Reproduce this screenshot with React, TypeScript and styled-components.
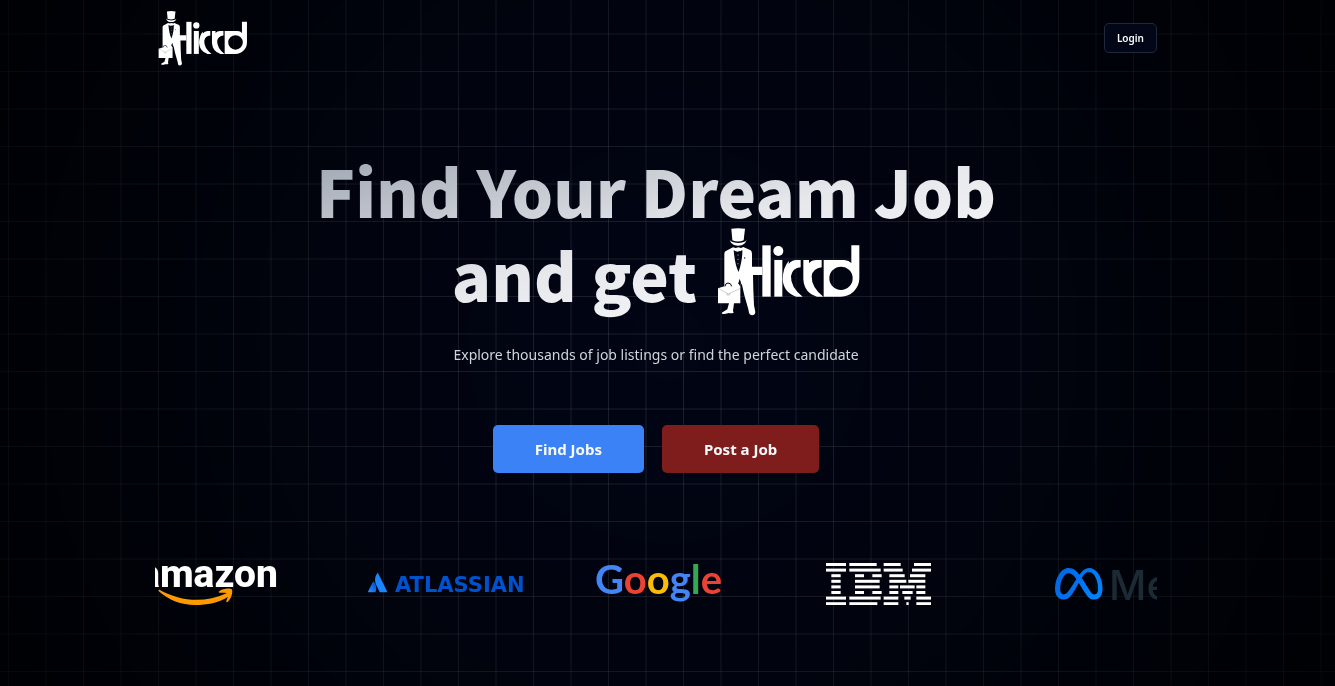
import React from "react";
import styled, { createGlobalStyle } from "styled-components";

const GlobalStyle = createGlobalStyle`
  *, *::before, *::after { box-sizing: border-box; }
  body {
    margin: 0;
    background: #020617;
    color: #f8fafc;
    font-family: "Noto Sans", "Open Sans", sans-serif;
  }
`;

const crispLine = "rgba(255, 255, 255, 0.12)";
const softLine = "rgba(255, 255, 255, 0.06)";

const GridBackdrop = styled.div`
  position: fixed;
  inset: 0;
  z-index: -1;
  background-image:
    radial-gradient(circle farthest-corner, rgba(0, 0, 0, 0.1) 0%, rgba(0, 0, 0, 0.4) 50%, rgba(0, 0, 0, 0.8) 100%),
    linear-gradient(to right, transparent 8px, ${crispLine} 8px, ${crispLine} 9px, transparent 9px, transparent 45px, ${softLine} 45px, ${softLine} 47px, transparent 47px),
    linear-gradient(to bottom, transparent 33px, ${softLine} 33px, ${softLine} 35px, transparent 35px, transparent 71px, ${crispLine} 71px, ${crispLine} 72px, transparent 72px);
  background-size: 100% 100%, 75px 75px, 75px 75px;
`;

const Page = styled.div`
  padding-right: 23px;
`;

const Container = styled.div`
  max-width: 1050px;
  margin: 0 auto;
  padding: 0 24px;
`;

const Header = styled.header`
  display: flex;
  align-items: center;
  justify-content: space-between;
  height: 76px;
`;

const HomeLink = styled.a`
  display: flex;
  padding-left: 3px;
`;

const LoginButton = styled.button`
  height: 30px;
  padding: 0 12px;
  border: 1px solid #1e293b;
  border-radius: 5px;
  background: #020617;
  color: #f8fafc;
  font: 600 10px/16px "Noto Sans", sans-serif;
  cursor: pointer;
`;

const Hero = styled.section`
  display: flex;
  flex-direction: column;
  align-items: center;
  padding-top: 72px;
`;

const Title = styled.h1`
  margin: 0;
  padding-bottom: 8px;
  background: linear-gradient(to bottom right, #9ca3af, #e5e7eb, #ffffff);
  background-clip: text;
  -webkit-background-clip: text;
  color: transparent;
  font: 900 65px/84px "Noto Sans CJK SC", "Noto Sans", sans-serif;
`;

const TitleLine = styled.span`
  display: flex;
  justify-content: center;
  align-items: flex-end;
  gap: 20px;
  height: 84px;
`;

const Subtitle = styled.p`
  margin: 19px 0 0;
  color: #d1d5db;
  font-size: 14px;
  line-height: 24px;
`;

const Actions = styled.div`
  display: flex;
  justify-content: center;
  gap: 18px;
  margin-top: 58px;
`;

const ActionLink = styled.a<{ $tone: string }>`
  display: flex;
  align-items: center;
  height: 48px;
  padding: 0 42px;
  border-radius: 5px;
  background: ${(p) => p.$tone};
  color: #f8fafc;
  font-size: 15px;
  font-weight: 700;
  line-height: 24px;
  text-decoration: none;
`;

const Carousel = styled.section`
  overflow: hidden;
  margin-top: 90px;
`;

const Track = styled.ul`
  display: flex;
  gap: 16px;
  margin: 0 0 0 -16px;
  padding: 0;
  list-style: none;
`;

const Slide = styled.li`
  flex: 0 0 213px;
  height: 42px;
`;

const BrandSvg = styled.svg`
  display: block;
  width: 213px;
  height: 42px;
  overflow: visible;
`;

const LogoSvg = styled.svg<{ $height: number }>`
  display: block;
  flex: none;
  height: ${(p) => p.$height}px;
`;

function HiccdLogo({ height }: { height: number }) {
  return (
    <LogoSvg $height={height} viewBox="42 24 429 264" role="img" aria-label="Hiccd" fill="#fff">
      {/* top hat */}
      <path d="M85 26Q105 23 126 26L122 61Q105 68 88 61Z" />
      <path d="M80 60Q84 66 92 67Q106 71 120 67Q127 65 131 60Q128 71 118 75Q105 79 93 75Q83 71 80 60Z" />
      {/* jacket and trousers */}
      <path d="M90 82L98 84L106 82L114 84L121 81L143 91Q147 94 147 102V140H178V165H150L151 210L153 256L157 276Q156 286 147 286Q139 285 138 278L136 268L124 226L116 190L112 203V250H93L90 272L92 278Q84 281 77 279Q67 283 58 282Q55 277 61 275L73 268L78 250H45V205L64 199V101Q64 94 70 92Z" />
      {/* shirt front, tie and lapels */}
      <path d="M92 91L103 95L118 91Q119 118 107 156Q96 137 92 91Z" fill="#050815" />
      <path d="M97 84L104 88L113 84V94L104 91L97 94Z" />
      <circle cx="105" cy="105" r="1.5" />
      <circle cx="105" cy="118" r="1.5" />
      <circle cx="105" cy="131" r="1.5" />
      <path d="M110 176L106 190L113 202L114 188Z" fill="#050815" />
      <circle cx="125" cy="114" r="2" fill="#050815" />
      {/* briefcase */}
      <path d="M66 199Q67 189 75 189Q84 189 86 199" fill="none" stroke="#050815" strokeWidth="3" />
      <path d="M45 205L76 222L112 205M72 219V225H80V219" fill="none" stroke="#9ca3af" strokeWidth="1.5" />
      {/* wordmark strokes */}
      <rect x="178" y="76" width="25" height="154" />
      <circle cx="226" cy="93" r="15" />
      <rect x="214" y="120" width="24" height="110" />
      <path d="M258 122L257 132Q266 120 280 120H293V142Q268 144 264 168Q262 201 299 230H280Q242 219 239 178Q240 141 258 122Z" />
      <path d="M301 120H318V130Q326 120 340 120H356V142Q330 145 326 168Q325 202 361 230H342Q304 220 301 178Z" />
      <path fillRule="evenodd" d="M362 120H424Q438 121 445 129V76H469V175A55 55 0 0 1 414 230H362ZM449 175A35 35 0 1 0 379 175A35 35 0 1 0 449 175Z" />
    </LogoSvg>
  );
}

function AmazonLogo() {
  return (
    <BrandSvg viewBox="0 0 213 42" role="img" aria-label="Amazon">
      <text x="139" y="24" textAnchor="end" fill="#fff" fontFamily="Roboto, sans-serif" fontWeight="800" fontSize="39">amazon</text>
      <path d="M20 26.500C42 39 66 40 87 30.500C90 29 92 31.500 89.500 33.500C80 40 68 42 56 42C42 42 30 37 19.500 28Z" fill="#ff9900" />
      <path d="M80 28.500C84 25 91 25 93 26.500C94 30 92 36 88.500 39C87.500 39.500 87 39 87.300 38C88.500 35 90 31.500 89 30.500C87.500 29.500 84 29.500 81 29.800C79.800 29.900 79.500 29 80 28.500Z" fill="#ff9900" />
    </BrandSvg>
  );
}

function AtlassianLogo() {
  return (
    <BrandSvg viewBox="0 0 213 42" role="img" aria-label="Atlassian">
      <defs>
        <linearGradient id="atlassian-fold" x1="1" y1="0.2" x2="0.3" y2="1">
          <stop offset="0" stopColor="#0052cc" />
          <stop offset="1" stopColor="#2684ff" />
        </linearGradient>
      </defs>
      <g transform="translate(0 10) scale(0.8)">
        <path fill="url(#atlassian-fold)" d="M7.120 11.084a.683.683 0 0 0-1.160.126L.075 22.974a.703.703 0 0 0 .630 1.018h8.190a.678.678 0 0 0 .630-.390c1.767-3.650.696-9.203-2.406-12.520z" />
        <path fill="#1a85ff" d="M11.434.386a15.515 15.515 0 0 0-.906 15.317l3.950 7.900a.703.703 0 0 0 .628.388h8.190a.703.703 0 0 0 .630-1.017L12.630.380a.664.664 0 0 0-1.196.006z" />
      </g>
      <text x="27" y="29" fill="#0052cc" fontFamily="'DejaVu Sans', sans-serif" fontWeight="700" fontSize="21">ATLASSIAN</text>
    </BrandSvg>
  );
}

function GoogleLogo() {
  return (
    <BrandSvg viewBox="0 0 213 42" role="img" aria-label="Google">
      <text x="-2" y="31" fontFamily="Lato, sans-serif" fontWeight="700" fontSize="40">
        <tspan fill="#4285f4">G</tspan>
        <tspan fill="#ea4335">o</tspan>
        <tspan fill="#fbbc05">o</tspan>
        <tspan fill="#4285f4">g</tspan>
        <tspan fill="#34a853">l</tspan>
        <tspan fill="#ea4335">e</tspan>
      </text>
    </BrandSvg>
  );
}

/* Each row of the eight-bar mark lists the [start, end] of its bars, in thirds of a pixel. */
const ibmBars: number[][][] = [
  [[0, 60], [70, 152], [173, 224], [264, 315]],
  [[0, 60], [70, 164], [173, 230], [258, 315]],
  [[16, 44], [87, 114], [139, 167], [190, 236], [252, 298]],
  [[16, 44], [87, 161], [190, 241], [247, 298]],
  [[16, 44], [87, 161], [190, 217], [222, 266], [271, 298]],
  [[16, 44], [87, 114], [139, 167], [190, 217], [229, 260], [271, 298]],
  [[0, 60], [70, 164], [173, 217], [235, 254], [271, 315]],
  [[0, 60], [70, 154], [173, 217], [241, 248], [271, 315]],
];

function IbmLogo() {
  return (
    <BrandSvg viewBox="0 0 639 126" role="img" aria-label="IBM" fill="#fff">
      {ibmBars.map((row, i) =>
        row.map(([from, to]) => <rect key={`${i}-${from}`} x={from} y={i * 16.8} width={to - from} height="9" />)
      )}
    </BrandSvg>
  );
}

function MetaLogo() {
  return (
    <BrandSvg viewBox="0 0 213 42" role="img" aria-label="Meta">
      <defs>
        <linearGradient id="meta-loop" x1="0" y1="0" x2="1" y2="0.4">
          <stop offset="0" stopColor="#0064e0" />
          <stop offset="0.5" stopColor="#0070ee" />
          <stop offset="1" stopColor="#0082fb" />
        </linearGradient>
      </defs>
      <g transform="translate(0 -3) scale(1.98)">
        <path fill="url(#meta-loop)" d="M6.915 4.030c-1.968 0-3.683 1.280-4.871 3.113C.704 9.208 0 11.883 0 14.449c0 .706.070 1.369.210 1.973a6.624 6.624 0 0 0 .265.860 5.297 5.297 0 0 0 .371.761c.696 1.159 1.818 1.927 3.593 1.927 1.497 0 2.633-.671 3.965-2.444.760-1.012 1.144-1.626 2.663-4.320l.756-1.339.186-.325c.061.100.121.196.183.300l2.152 3.595c.724 1.210 1.665 2.556 2.470 3.314 1.046.987 1.992 1.220 3.060 1.220 1.075 0 1.876-.355 2.455-.843a3.743 3.743 0 0 0 .810-.973c.542-.939.861-2.127.861-3.745 0-2.720-.681-5.357-2.084-7.450-1.282-1.912-2.957-2.930-4.716-2.930-1.047 0-2.088.467-3.053 1.308-.652.570-1.257 1.290-1.820 2.050-.690-.875-1.335-1.547-1.958-2.056-1.182-.966-2.315-1.303-3.454-1.303zm10.160 2.053c1.147 0 2.188.758 2.992 1.999 1.132 1.748 1.647 4.195 1.647 6.400 0 1.548-.368 2.900-1.839 2.900-.580 0-1.027-.230-1.664-1.004-.496-.601-1.343-1.878-2.832-4.358l-.617-1.028a44.908 44.908 0 0 0-1.255-1.980c.070-.109.141-.224.211-.327 1.120-1.667 2.118-2.602 3.358-2.602zm-10.201.553c1.265 0 2.058.791 2.675 1.446.307.327.737.871 1.234 1.579l-1.020 1.566c-.757 1.163-1.882 3.017-2.837 4.338-1.191 1.649-1.810 1.817-2.486 1.817-.524 0-1.038-.237-1.383-.794-.263-.426-.464-1.130-.464-2.046 0-2.221.630-4.535 1.660-6.088.454-.687.964-1.226 1.533-1.533a2.264 2.264 0 0 1 1.088-.285z" />
      </g>
      <text x="54" y="37" fill="#1c2b33" fontFamily="Inter, sans-serif" fontWeight="500" fontSize="41">Meta</text>
    </BrandSvg>
  );
}

const brands = [AmazonLogo, AtlassianLogo, GoogleLogo, IbmLogo, MetaLogo];

export default function App() {
  return (
    <Page>
      <GlobalStyle />
      <GridBackdrop />
      <Container>
        <Header>
          <HomeLink href="#" aria-label="Hiccd home">
            <HiccdLogo height={55} />
          </HomeLink>
          <LoginButton type="button">Login</LoginButton>
        </Header>
        <main>
          <Hero>
            <Title>
              <TitleLine>Find Your Dream Job</TitleLine>
              <TitleLine>
                and get
                <HiccdLogo height={88} />
              </TitleLine>
            </Title>
            <Subtitle>Explore thousands of job listings or find the perfect candidate</Subtitle>
            <Actions>
              <ActionLink href="#jobs" $tone="#3b82f6">Find Jobs</ActionLink>
              <ActionLink href="#post-job" $tone="#7f1d1d">Post a Job</ActionLink>
            </Actions>
          </Hero>
          <Carousel aria-label="Companies">
            <Track>
              {brands.map((Brand, i) => (
                <Slide key={i}>
                  <Brand />
                </Slide>
              ))}
            </Track>
          </Carousel>
        </main>
      </Container>
    </Page>
  );
}
